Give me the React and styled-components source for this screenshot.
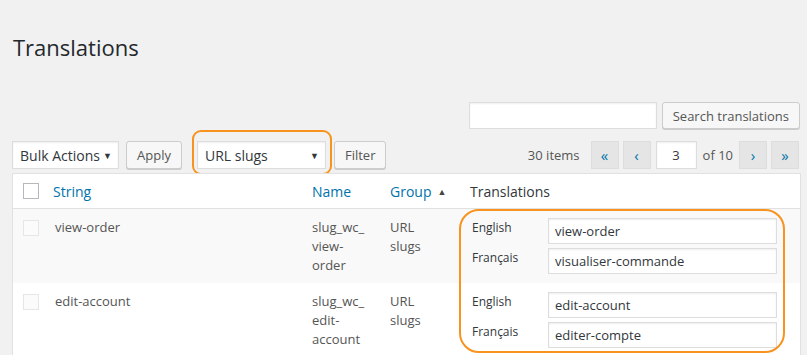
import React from 'react';
import styled, { createGlobalStyle } from 'styled-components';

const GlobalStyle = createGlobalStyle`
  html, body {
    margin: 0;
    background: #f1f1f1;
    font-family: 'Open Sans', 'Liberation Sans', sans-serif;
    font-size: 13px;
    color: #444;
  }
`;

const Page = styled.div`
  padding: 33px 7px 0 12px;
  height: 355px;
  box-sizing: border-box;
  overflow: hidden;
`;

const Title = styled.h1`
  margin: 0 0 0 1px;
  font-size: 22px;
  font-weight: 400;
  line-height: 29px;
  color: #23282d;
`;

const SearchRow = styled.div`
  display: flex;
  justify-content: flex-end;
  gap: 5px;
  margin-top: 40px;
`;

const TextInput = styled.input`
  box-sizing: border-box;
  width: ${(p) => p.$w || 188}px;
  height: ${(p) => p.$h || 27}px;
  border: 1px solid #ddd;
  background: #fff;
  box-shadow: inset 0 1px 2px rgba(0, 0, 0, 0.07);
  font: inherit;
  font-size: 13px;
  color: #32373c;
  padding: 0 6px;
  text-align: ${(p) => p.$align || 'left'};
  outline: none;
`;

const Button = styled.button`
  box-sizing: border-box;
  height: ${(p) => p.$h || 28}px;
  padding: 0 10px;
  border: 1px solid #ccc;
  border-radius: 3px;
  background: #f7f7f7;
  box-shadow: 0 1px 0 #ccc;
  color: #555;
  font: inherit;
  font-size: 13px;
`;

const Toolbar = styled.div`
  display: flex;
  align-items: center;
  margin-top: 12px;
  height: 28px;
`;

const Select = styled.div`
  box-sizing: border-box;
  height: 28px;
  width: ${(p) => p.$w}px;
  display: flex;
  align-items: center;
  justify-content: space-between;
  padding: 0 6px 0 7px;
  background: #fff;
  border: 1px solid #ddd;
  box-shadow: inset 0 1px 2px rgba(0, 0, 0, 0.07);
  color: #32373c;
  font-size: 14px;
  &::after {
    content: '▼';
    font-size: 9px;
    color: #32373c;
  }
`;

const Highlight = styled.div`
  position: relative;
  margin: 0 8px 0 15px;
`;

const Ring = styled.div`
  position: absolute;
  pointer-events: none;
  border: 2px solid #f7931e;
  border-radius: ${(p) => p.$r}px;
  top: ${(p) => p.$t}px;
  bottom: ${(p) => (p.$b === undefined ? 'auto' : `${p.$b}px`)};
  height: ${(p) => (p.$h ? `${p.$h}px` : 'auto')};
  left: ${(p) => p.$l}px;
  right: ${(p) => p.$rt}px;
  box-sizing: border-box;
`;

const Pager = styled.div`
  margin-left: auto;
  margin-right: 1px;
  display: flex;
  align-items: center;
  gap: 4px;
  color: #555;
  font-size: 13px;
`;

const PageBtn = styled.span`
  box-sizing: border-box;
  width: 28px;
  height: 28px;
  display: flex;
  align-items: center;
  justify-content: center;
  background: #e5e5e5;
  border: 1px solid #ddd;
  color: #0073aa;
  font-size: 15px;
  line-height: 1;
`;

const Count = styled.span`
  margin-right: 7px;
`;

const OfPages = styled.span`
  margin: 0 2px;
`;

const Table = styled.div`
  margin-top: 4px;
  width: 787px;
  background: #fff;
  border: 1px solid #e1e1e1;
  position: relative;
`;

const Row = styled.div`
  display: grid;
  grid-template-columns: 32px 259px 78px 80px 1fr;
  background: ${(p) => (p.$alt ? '#f9f9f9' : '#fff')};
  border-bottom: ${(p) => (p.$head ? '1px solid #e1e1e1' : 'none')};
  min-height: ${(p) => (p.$head ? 34 : 0)}px;
`;

const Cell = styled.div`
  padding: ${(p) => (p.$head ? '0 8px' : '9px 8px 8px')};
  padding-left: ${(p) => p.$pl || 8}px;
  display: flex;
  flex-direction: column;
  justify-content: ${(p) => (p.$head ? 'center' : 'flex-start')};
  line-height: 19px;
  color: ${(p) => (p.$dark ? '#32373c' : '#555')};
  font-size: ${(p) => (p.$head ? 14 : 13)}px;
`;

const CheckCell = styled(Cell)`
  padding-left: 10px;
  padding-right: 0;
  padding-top: ${(p) => (p.$head ? 0 : 11)}px;
`;

const Check = styled.span`
  display: block;
  width: 16px;
  height: 16px;
  box-sizing: border-box;
  border: 1px solid ${(p) => (p.$faint ? '#e6e6e6' : '#b4b9be')};
  background: ${(p) => (p.$faint ? '#fbfbfb' : '#fff')};
`;

const HeadLink = styled.span`
  color: #0073aa;
  display: flex;
  align-items: center;
  gap: 6px;
  &::after {
    content: ${(p) => (p.$sorted ? "'▲'" : 'none')};
    font-size: 9px;
    color: #444;
  }
`;

const TransCell = styled.div`
  padding: 9px 21px 8px 10px;
  display: grid;
  grid-template-columns: 76px 1fr;
  row-gap: 3px;
  align-items: start;
`;

const Lang = styled.label`
  font-size: 12px;
  color: #32373c;
  padding-top: 2px;
  line-height: 16px;
`;

const rows = [
  { string: 'view-order', name: ['slug_wc_', 'view-', 'order'], en: 'view-order', fr: 'visualiser-commande' },
  { string: 'edit-account', name: ['slug_wc_', 'edit-', 'account'], en: 'edit-account', fr: 'editer-compte' },
];

export default function App() {
  return (
    <Page>
      <GlobalStyle />
      <Title>Translations</Title>
      <SearchRow>
        <TextInput />
        <Button $h={27}>Search translations</Button>
      </SearchRow>
      <Toolbar>
        <Select $w={107}>Bulk Actions</Select>
        <Button style={{ marginLeft: 7 }}>Apply</Button>
        <Highlight>
          <Select $w={129}>URL slugs</Select>
          <Ring $t={-11} $b={-6} $l={-5} $rt={-6} $r={9} />
        </Highlight>
        <Button>Filter</Button>
        <Pager>
          <Count>30 items</Count>
          <PageBtn>«</PageBtn>
          <PageBtn>‹</PageBtn>
          <TextInput $w={41} $h={28} $align="center" defaultValue="3" style={{ marginLeft: 1 }} />
          <OfPages>of 10</OfPages>
          <PageBtn>›</PageBtn>
          <PageBtn>»</PageBtn>
        </Pager>
      </Toolbar>
      <Table>
        <Row $head>
          <CheckCell $head><Check /></CheckCell>
          <Cell $head><HeadLink>String</HeadLink></Cell>
          <Cell $head><HeadLink>Name</HeadLink></Cell>
          <Cell $head><HeadLink $sorted>Group</HeadLink></Cell>
          <Cell $head $dark>Translations</Cell>
        </Row>
        {rows.map((r, i) => (
          <Row key={r.string} $alt={i === 0}>
            <CheckCell><Check $faint /></CheckCell>
            <Cell $pl={10}>{r.string}</Cell>
            <Cell>{r.name.map((n) => <span key={n}>{n}</span>)}</Cell>
            <Cell><span>URL</span><span>slugs</span></Cell>
            <TransCell>
              <Lang>English</Lang>
              <TextInput $w={229} $h={26} defaultValue={r.en} />
              <Lang>Français</Lang>
              <TextInput $w={229} $h={26} defaultValue={r.fr} />
            </TransCell>
          </Row>
        ))}
        <Ring $t={35} $h={144} $l={446} $rt={15} $r={20} />
      </Table>
    </Page>
  );
}
